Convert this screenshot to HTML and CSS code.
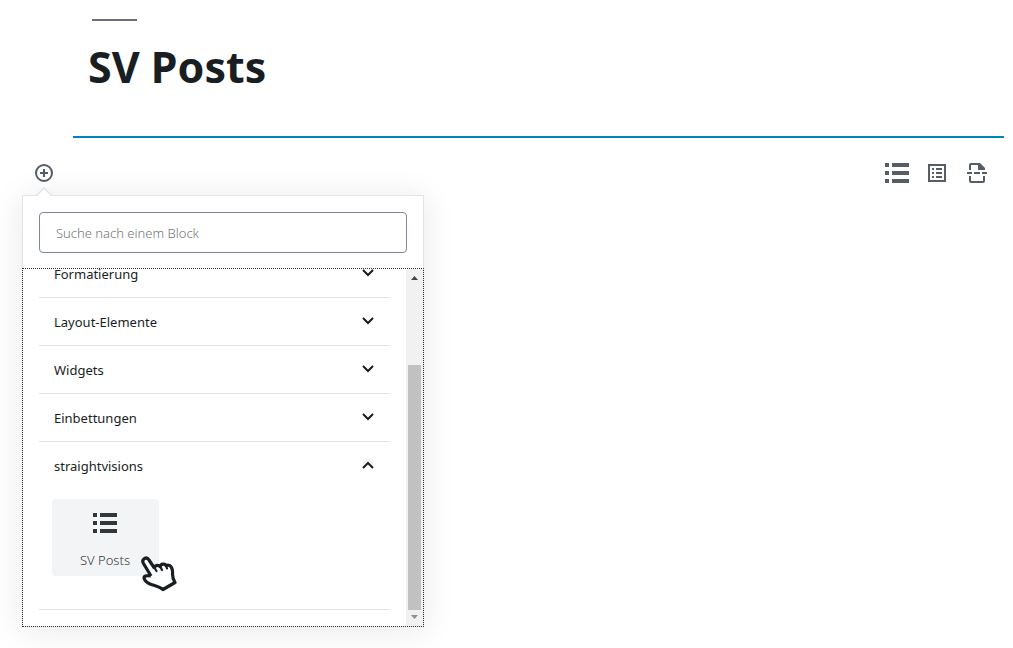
FILE: index.html
```html
<!DOCTYPE html>
<html lang="de">
<head>
<meta charset="utf-8">
<title>SV Posts</title>
<link rel="stylesheet" href="styles.css">
</head>
<body>
<svg class="defs" aria-hidden="true">
  <symbol id="list" viewBox="0 0 24 20"><path d="M0 0h4v4H0zM7 0h17v4H7zM0 8h4v4H0zM7 8h17v4H7zM0 16h4v4H0zM7 16h17v4H7z"/></symbol>
  <symbol id="down" viewBox="0 0 12 8"><path d="M1 1l5 5 5-5" fill="none" stroke="currentColor" stroke-width="2"/></symbol>
  <symbol id="up" viewBox="0 0 12 8"><path d="M1 7l5-5 5 5" fill="none" stroke="currentColor" stroke-width="2"/></symbol>
</svg>
<main class="editor">
  <header class="title-block">
    <h1 class="title">SV Posts</h1>
  </header>
  <div class="toolbar">
    <div class="inserter">
      <button class="icon-button" type="button" aria-label="Block hinzufügen" aria-expanded="true">
        <svg width="20" height="20" viewBox="0 0 20 20"><g fill="none" stroke="currentColor" stroke-width="2"><circle cx="10" cy="10" r="8"/><path d="M10 6v8M6 10h8"/></g></svg>
      </button>
      <div class="popover">
        <svg class="arrow" width="16" height="9" viewBox="0 0 16 9"><path d="M0 9L8 1l8 8" fill="#fff" stroke="#e2e4e7" stroke-width="1.5"/></svg>
        <div class="search"><input class="search-input" type="search" placeholder="Suche nach einem Block" aria-label="Suche nach einem Block"></div>
        <div class="results">
          <div class="panels">
            <section class="panel"><button class="panel-toggle" type="button">Formatierung<svg class="chevron"><use href="#down"/></svg></button></section>
            <section class="panel"><button class="panel-toggle" type="button">Layout-Elemente<svg class="chevron"><use href="#down"/></svg></button></section>
            <section class="panel"><button class="panel-toggle" type="button">Widgets<svg class="chevron"><use href="#down"/></svg></button></section>
            <section class="panel"><button class="panel-toggle" type="button">Einbettungen<svg class="chevron"><use href="#down"/></svg></button></section>
            <section class="panel">
              <button class="panel-toggle" type="button" aria-expanded="true">straightvisions<svg class="chevron"><use href="#up"/></svg></button>
              <div class="blocks">
                <button class="block" type="button"><svg class="list-icon"><use href="#list"/></svg><span>SV Posts</span></button>
                <svg class="pointer" width="40" height="38" viewBox="0 0 40 38"><path d="M12 21L4.500 8.500C2 4 7.500 1 10 5L15 12.500C17 9.500 20 10 21 11.500C22 8.500 26 8.500 27 10.500C32 8.500 34 14 33.500 19C33.500 23 34.500 25 36 27.500L24 34.500C20 31 16 31 11 29C7.500 27.500 5.500 26 5 23C5 20.500 8.500 20.500 12 21" fill="#fff" stroke="#191e23" stroke-width="3.200" stroke-linejoin="round"/><path d="M15 12l2.500 4M21 11l2 4M27 10.500l1 3" fill="none" stroke="#191e23" stroke-width="2.200" stroke-linecap="round"/></svg>
              </div>
            </section>
          </div>
          <div class="scrollbar">
            <svg width="16" height="16" viewBox="0 0 16 16"><path d="M5 11l3.500-4 3.500 4z" fill="#42464c"/></svg>
            <div class="thumb"></div>
            <svg width="16" height="16" viewBox="0 0 16 16"><path d="M5 5h7L8.500 9z" fill="#8c8f93"/></svg>
          </div>
        </div>
      </div>
    </div>
    <div class="shortcuts">
      <button class="icon-button" type="button" aria-label="SV Posts"><svg class="list-icon"><use href="#list"/></svg></button>
      <button class="icon-button" type="button" aria-label="Liste"><svg width="18" height="18" viewBox="0 0 18 18"><path d="M1 1h16v16H1z" fill="none" stroke="currentColor" stroke-width="2"/><path d="M4 4h2v2H4zM8 4h6v2H8zM4 8h2v2H4zM8 8h6v2H8zM4 12h2v2H4zM8 12h6v2H8z"/></svg></button>
      <button class="icon-button" type="button" aria-label="Seitenumbruch"><svg width="20" height="20" viewBox="0 0 20 20"><path d="M3 7V2q0-1 1-1h8l5 5v1M3 13v5q0 1 1 1h12q1 0 1-1v-5" fill="none" stroke="currentColor" stroke-width="2"/><path d="M11 0h2l5 5v2h-7zM0 9h5v2H0zM7 9h6v2H7zM15 9h5v2h-5z"/></svg></button>
    </div>
  </div>
</main>
</body>
</html>
```
FILE: styles.css
```css
* { box-sizing: border-box; }
body {
  margin: 0;
  min-height: 100vh;
  background: #fff;
  color: #191e23;
  font: 13px/20px "Noto Sans", "Open Sans", sans-serif;
}
button {
  margin: 0;
  padding: 0;
  border: 0;
  background: none;
  color: inherit;
  font: inherit;
}
svg { display: block; fill: currentColor; }
.defs { display: none; }
.editor { min-height: 100vh; padding: 19px 9px 0 22px; }
.title-block {
  margin-left: 51px;
  padding: 0 15px 39px;
  border-bottom: 2px solid #0085ba;
}
.title-block::before {
  content: "";
  display: block;
  width: 45px;
  height: 2px;
  margin-left: 4px;
  background: #6c7078;
}
.title {
  margin: 16px 0 0;
  font-size: 43px;
  line-height: 60px;
  font-weight: 700;
}
.toolbar {
  display: flex;
  justify-content: space-between;
  height: 40px;
  margin-top: 15px;
  color: #555d66;
}
.inserter { position: relative; }
.icon-button {
  display: flex;
  align-items: center;
  justify-content: center;
  width: 40px;
  height: 40px;
}
.inserter .icon-button { width: 44px; }
.shortcuts { display: flex; padding-right: 7px; }
.list-icon { width: 24px; height: 20px; }
.popover {
  position: absolute;
  top: 42px;
  left: 0;
  width: 402px;
  border: 1px solid #e2e4e7;
  background: #fff;
  box-shadow: 0 3px 30px rgba(25, 30, 35, 0.1);
  color: #191e23;
}
.arrow { position: absolute; top: -9px; left: 13px; }
.search { padding: 16px 16px 15px; }
.search-input {
  display: block;
  width: 100%;
  height: 41px;
  padding: 0 16px;
  border: 1px solid #7e8993;
  border-radius: 4px;
  background: #fff;
  font: 300 13px/20px "Noto Sans", "Open Sans", sans-serif;
}
.search-input::placeholder { color: #72777c; opacity: 1; }
.results {
  display: flex;
  height: 359px;
  margin: 0 -1px -1px;
  border: 1px dotted #32373c;
}
.panels {
  flex: 1;
  display: flex;
  flex-direction: column;
  justify-content: flex-end;
  overflow: hidden;
  padding: 0 16px;
}
.panel { flex: none; border-bottom: 1px solid #e2e4e7; }
.panel:last-child { margin-bottom: 16px; }
.panel-toggle {
  display: flex;
  align-items: center;
  justify-content: space-between;
  width: 100%;
  height: 47px;
  padding: 0 16px 0 15px;
  font-weight: 400;
}
.chevron { width: 12px; height: 8px; margin-bottom: 2px; }
.blocks {
  position: relative;
  padding: 10px 13px 33px;
}
.block {
  display: flex;
  flex-direction: column;
  align-items: center;
  gap: 17px;
  width: 107px;
  height: 77px;
  padding: 14px 1px 0 0;
  border-radius: 4px;
  background: #f3f4f5;
  color: #32373c;
  font-weight: 300;
}
.pointer { position: absolute; top: 66px; left: 100px; }
.scrollbar {
  display: flex;
  flex-direction: column;
  width: 17px;
  background: #f1f1f1;
}
.thumb {
  flex: 1;
  margin: 80px 2px 0;
  background: #c1c1c1;
}
```
